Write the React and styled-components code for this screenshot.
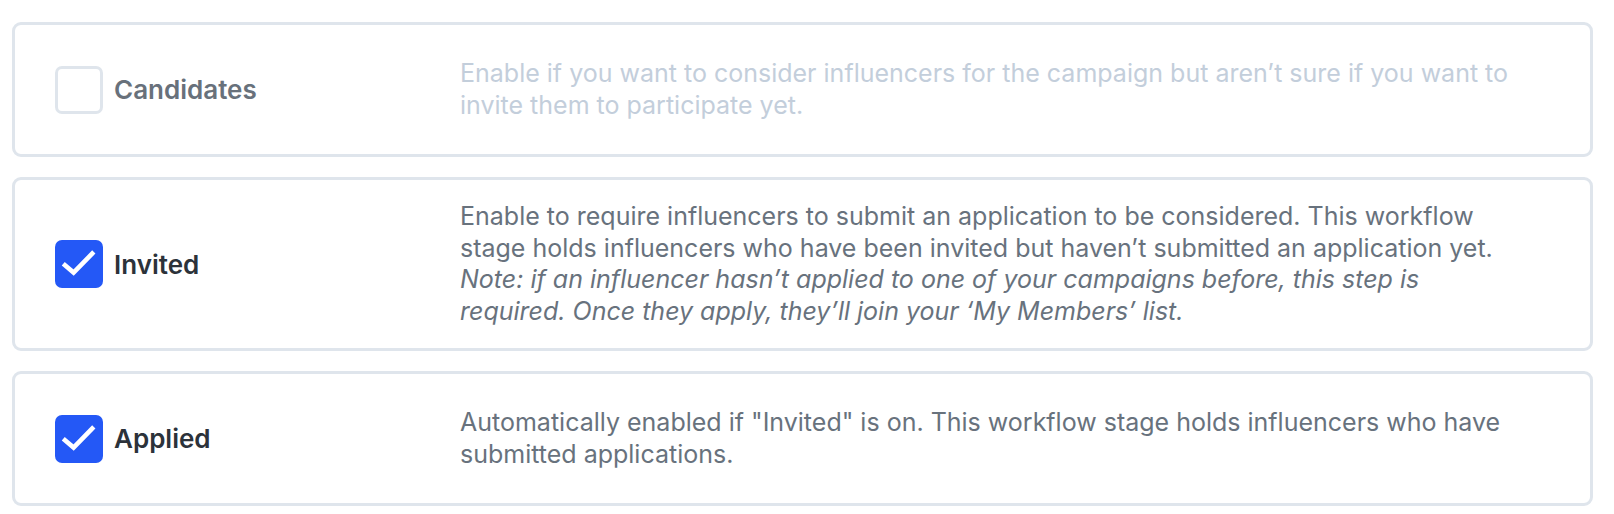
import styled, { createGlobalStyle } from 'styled-components';

const GlobalStyle = createGlobalStyle`
    html, body {
        margin: 0;
        padding: 0;
        background: #fff;
    }
    body {
        font-family: Inter, "Noto Sans", sans-serif;
        -webkit-font-smoothing: antialiased;
    }
`

const Page = styled.div`
    padding: 22px 21px 0 12px;
    display: flex;
    flex-direction: column;
    gap: 20px;
`

const Card = styled.label`
    display: grid;
    grid-template-columns: 405px 1fr;
    align-items: center;
    min-height: 135px;
    box-sizing: border-box;
    padding: 21px 8px 21px 40px;
    border: 3px solid #dfe5ec;
    border-radius: 9px;
    background: #fff;
`

const Left = styled.div`
    display: flex;
    align-items: center;
    gap: 11px;
`

const Box = styled.span`
    width: 48px;
    height: 48px;
    flex-shrink: 0;
    box-sizing: border-box;
    border-radius: 7px;
    display: flex;
    align-items: center;
    justify-content: center;
    background: ${p => p.$checked ? '#2458f6' : '#fff'};
    border: ${p => p.$checked ? 'none' : '3px solid #dfe5ec'};
`

const Title = styled.span`
    font-size: 26px;
    font-weight: 600;
    color: ${p => p.$disabled ? '#68717b' : '#2c323a'};
`

const Desc = styled.p`
    margin: 0;
    font-size: 25px;
    line-height: 31.6px;
    white-space: pre-line;
    color: ${p => p.$disabled ? '#c3cedb' : '#68727d'};
    & em {
        font-style: italic;
    }
`

const stages = [
    {
        title: 'Candidates',
        checked: false,
        disabled: true,
        text: 'Enable if you want to consider influencers for the campaign but aren’t sure if you want to\ninvite them to participate yet.',
    },
    {
        title: 'Invited',
        checked: true,
        text: 'Enable to require influencers to submit an application to be considered. This workflow\nstage holds influencers who have been invited but haven’t submitted an application yet.',
        note: 'Note: if an influencer hasn’t applied to one of your campaigns before, this step is\nrequired. Once they apply, they’ll join your ‘My Members’ list.',
    },
    {
        title: 'Applied',
        checked: true,
        text: 'Automatically enabled if "Invited" is on. This workflow stage holds influencers who have\nsubmitted applications.',
    },
]

function Check () {
    return (
        <svg width="48" height="48" viewBox="0 0 24 24" fill="none">
            <polyline points="5,12.6 9.3,16.3 18.6,6.8" stroke="#fff" strokeWidth="2.3" strokeLinecap="square" strokeLinejoin="miter" />
        </svg>
    );
}

function App () {
    return (
        <>
            <GlobalStyle />
            <Page>
                {stages.map(s => (
                    <Card key={s.title}>
                        <Left>
                            <Box $checked={s.checked}>{s.checked && <Check />}</Box>
                            <Title $disabled={s.disabled}>{s.title}</Title>
                        </Left>
                        <Desc $disabled={s.disabled}>
                            {s.text}
                            {s.note && <>{'\n'}<em>{s.note}</em></>}
                        </Desc>
                    </Card>
                ))}
            </Page>
        </>
    );
}

export default App;
